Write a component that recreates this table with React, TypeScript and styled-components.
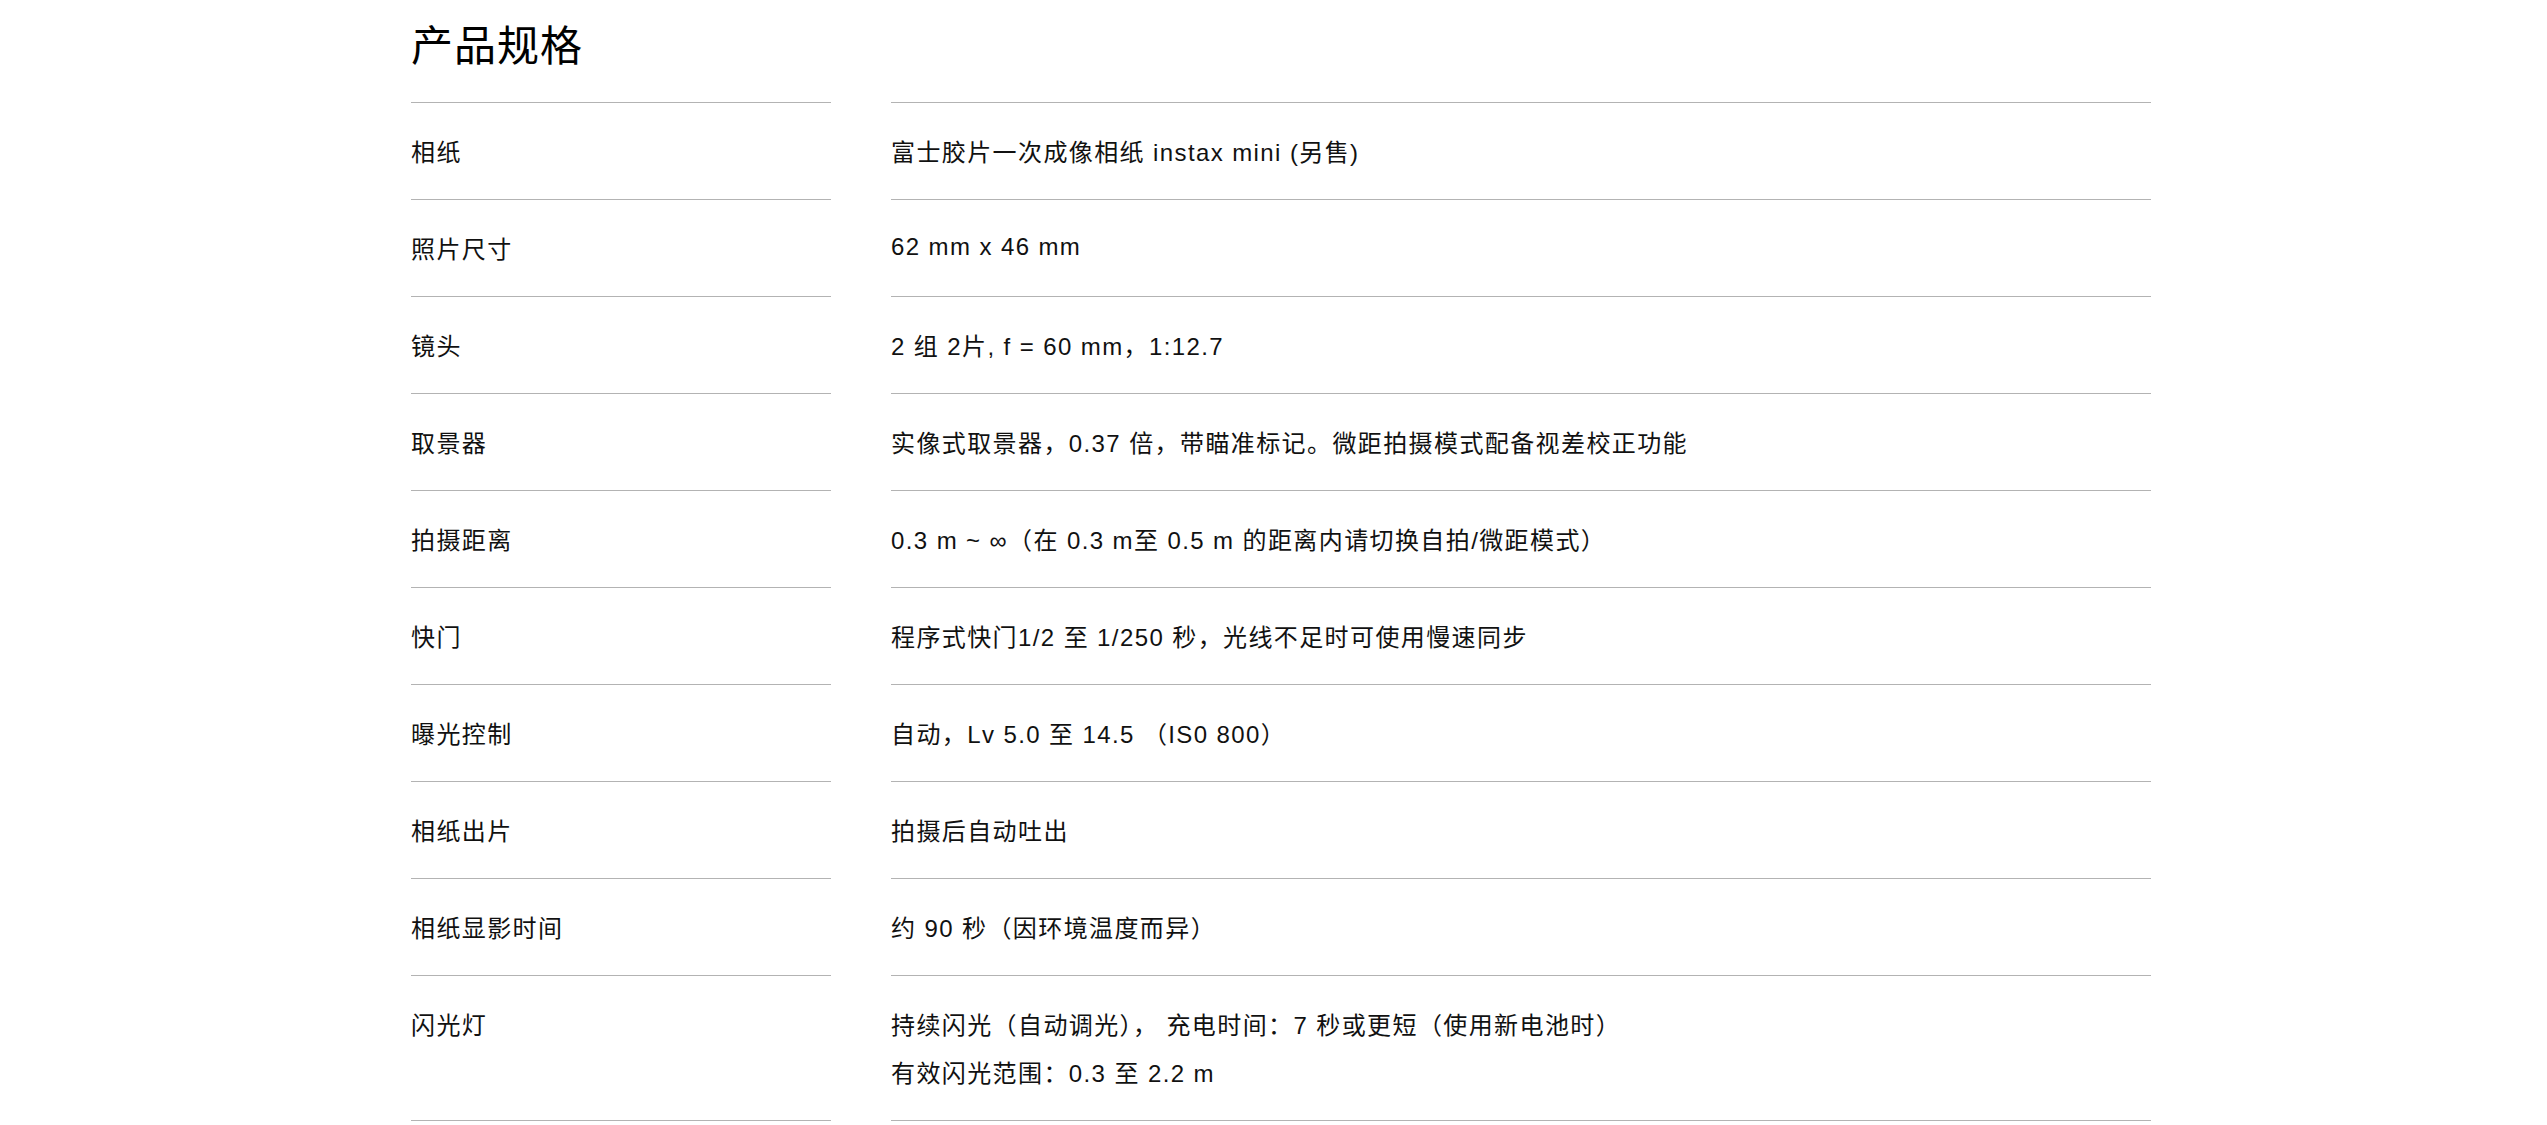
import React from "react";
import styled, { createGlobalStyle } from "styled-components";

const GlobalStyle = createGlobalStyle`
  html, body {
    margin: 0;
    padding: 0;
    background: #ffffff;
  }
  body {
    font-family: "Liberation Sans", Arial, "Noto Sans CJK SC", sans-serif;
    color: #111111;
  }
`;

const Page = styled.div`
  padding-left: 15px;
`;

const Section = styled.section`
  width: 1740px;
  margin: 0 auto;
`;

const Title = styled.h2`
  margin: 22px 0 30px;
  font-size: 42px;
  line-height: 50px;
  font-weight: 400;
  letter-spacing: 1px;
  color: #000000;
`;

const SpecList = styled.dl`
  display: grid;
  grid-template-columns: 420px 1260px;
  column-gap: 60px;
  margin: 0;
`;

const Cell = styled.div<{ $last?: boolean }>`
  border-top: 1px solid #b3b3b3;
  border-bottom: ${(p) => (p.$last ? "1px solid #b3b3b3" : "none")};
  padding: 24px 0;
  font-size: 24px;
  letter-spacing: 1.4px;
`;

const Term = styled(Cell).attrs({ as: "dt" })``;
const Detail = styled(Cell).attrs({ as: "dd" })`
  margin: 0;
`;

const Line = styled.span`
  display: flex;
  align-items: center;
  height: 48px;
  margin-top: -1px;
  padding-bottom: 1px;
  box-sizing: content-box;
  white-space: pre;
`;

const specs: { label: string; value: string[] }[] = [
  { label: "相纸", value: ["富士胶片一次成像相纸 instax mini (另售)"] },
  { label: "照片尺寸", value: ["62 mm x 46 mm"] },
  { label: "镜头", value: ["2 组 2片, f = 60 mm，1:12.7"] },
  { label: "取景器", value: ["实像式取景器，0.37 倍，带瞄准标记。微距拍摄模式配备视差校正功能"] },
  { label: "拍摄距离", value: ["0.3 m ~ ∞（在 0.3 m至 0.5 m 的距离内请切换自拍/微距模式）"] },
  { label: "快门", value: ["程序式快门1/2 至 1/250 秒，光线不足时可使用慢速同步"] },
  { label: "曝光控制", value: ["自动，Lv 5.0 至 14.5 （IS0 800）"] },
  { label: "相纸出片", value: ["拍摄后自动吐出"] },
  { label: "相纸显影时间", value: ["约 90 秒（因环境温度而异）"] },
  {
    label: "闪光灯",
    value: ["持续闪光（自动调光）， 充电时间：7 秒或更短（使用新电池时）", "有效闪光范围：0.3 至 2.2 m"],
  },
];

export default function App() {
  return (
    <Page>
      <GlobalStyle />
      <Section>
        <Title>产品规格</Title>
        <SpecList>
          {specs.map((s, i) => {
            const last = i === specs.length - 1;
            return (
              <React.Fragment key={s.label}>
                <Term $last={last}>
                  <Line>{s.label}</Line>
                </Term>
                <Detail $last={last}>
                  {s.value.map((v) => (
                    <Line key={v}>{v}</Line>
                  ))}
                </Detail>
              </React.Fragment>
            );
          })}
        </SpecList>
      </Section>
    </Page>
  );
}
